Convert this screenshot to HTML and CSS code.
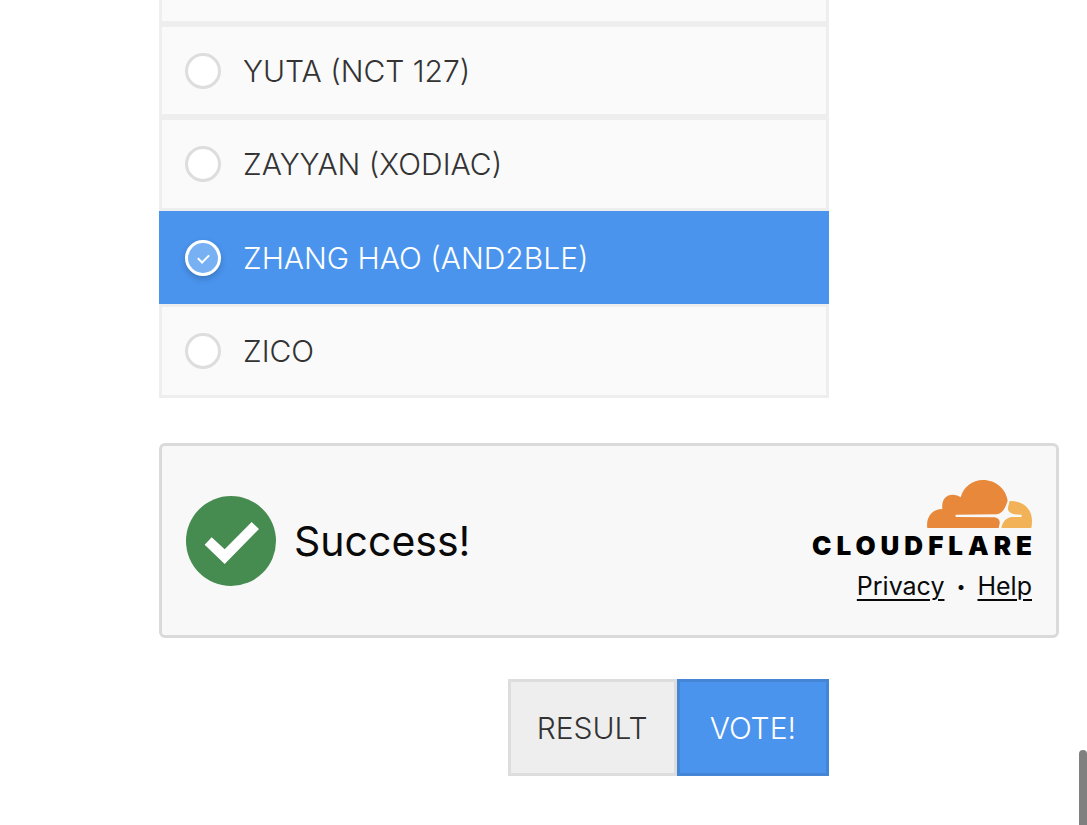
FILE: index.html
```html
<!DOCTYPE html>
<html lang="en">
<head>
<meta charset="utf-8">
<meta name="viewport" content="width=device-width, initial-scale=1">
<title>Vote</title>
<link rel="stylesheet" href="styles.css">
</head>
<body>
<main class="poll">
  <form class="poll-form">
    <div class="options" role="radiogroup" aria-label="Candidates">
      <div class="option option-cut"></div>
      <label class="option"><input class="radio" type="radio" name="vote"><span>YUTA (NCT 127)</span></label>
      <label class="option"><input class="radio" type="radio" name="vote"><span>ZAYYAN (XODIAC)</span></label>
      <label class="option"><input class="radio" type="radio" name="vote" checked><span>ZHANG HAO (AND2BLE)</span></label>
      <label class="option"><input class="radio" type="radio" name="vote"><span>ZICO</span></label>
    </div>

    <section class="check">
      <div class="status">
        <svg class="status-icon" viewBox="0 0 270 270" aria-hidden="true">
          <circle cx="135" cy="135" r="135" fill="#468b50"/>
          <path d="M56 146L77 124L116 160L197 78L219 99L116 204Z" fill="#fff"/>
        </svg>
        <span class="status-text">Success!</span>
      </div>
      <div class="brand">
        <svg class="cloud" viewBox="0 0 315 144" aria-hidden="true">
          <path fill="#e8883a" d="M1 144C-4 112 15 87 46 87C43 59 57 44 77 44C87 44 94 47 101 52C110 20 136 0 168 0C207 0 237 27 242 62C237 77 230 99 210 103L87 104Q83 107.500 87 111L203 112C216 114 221 124 217 135L215 144Z"/>
          <path fill="#f2b257" d="M248 63C289 61 315 88 315 122Q315 134 313 144H223C226 127 237 113 254 111H283Q286 107.500 283 104L261 103C246 98 240 91 244 78Z"/>
        </svg>
        <span class="brand-name">CLOUDFLARE</span>
        <nav class="links">
          <a href="#privacy">Privacy</a>
          <span class="dot">•</span>
          <a href="#help">Help</a>
        </nav>
      </div>
    </section>

    <div class="actions">
      <button class="button" type="button">RESULT</button>
      <button class="button button-primary" type="submit">VOTE!</button>
    </div>
  </form>
</main>
<div class="scroll-thumb"></div>
</body>
</html>
```
FILE: styles.css
```css
* { box-sizing: border-box; }

body {
  margin: 0;
  background: #fff;
  color: #333;
  font-family: Inter, "Liberation Sans", sans-serif;
}

.poll { padding: 0 28px 40px 159px; }

.options {
  display: grid;
  grid-template-rows: 24px;
  grid-auto-rows: 93px 94px;
  max-width: 670px;
}

.option {
  display: flex;
  align-items: center;
  gap: 22px;
  padding: 0 23px;
  border: 3px solid #eee;
  background: #fafafa;
  font-size: 30px;
  font-weight: 350;
  line-height: 40px;
}

.option-cut { border-top: 0; }

.option:has(.radio:checked) {
  border-color: #4a94ee;
  background: #4a94ee;
  color: #fff;
  font-weight: 300;
}

.radio {
  appearance: none;
  display: grid;
  place-items: center;
  flex: none;
  width: 36px;
  height: 36px;
  margin: 0;
  border: 3px solid #ddd;
  border-radius: 50%;
  background: #fff;
}

.radio:checked {
  border-color: #fff;
  background: #77b0f3;
  box-shadow: 0 3px 6px rgb(0 0 0 / 20%);
}

.radio:checked::before {
  content: "";
  width: 9px;
  height: 5px;
  border: solid #fff;
  border-width: 0 0 2px 2px;
  transform: rotate(-45deg);
}

.check {
  display: flex;
  align-items: center;
  justify-content: space-between;
  max-width: 900px;
  min-height: 195px;
  margin-top: 45px;
  padding: 0 24px;
  border: 3px solid #dadada;
  border-radius: 6px;
  background: #f8f8f8;
  color: #0a0a0a;
}

.status {
  display: flex;
  align-items: center;
  gap: 18px;
}

.status-icon { width: 90px; height: 90px; }

.status-text { font-size: 41px; line-height: 50px; }

.brand {
  display: flex;
  flex-direction: column;
  align-items: flex-end;
}

.cloud { width: 105px; height: 48px; }

.brand-name {
  margin-top: 3px;
  margin-right: -5px;
  color: #000;
  font-size: 26px;
  font-weight: 900;
  line-height: 30px;
  letter-spacing: 5px;
}

.links {
  display: flex;
  gap: 12px;
  margin-top: 10px;
  font-size: 25px;
  line-height: 30px;
}

.links a {
  color: inherit;
  text-decoration-thickness: 2px;
  text-underline-offset: 4px;
}

.dot { font-size: 16px; }

.actions {
  display: flex;
  justify-content: flex-end;
  max-width: 670px;
  margin-top: 41px;
}

.button {
  height: 97px;
  padding: 0 26px;
  border: 3px solid #ddd;
  background: #eee;
  color: #333;
  font-family: inherit;
  font-size: 30px;
  font-weight: 300;
}

.button-primary {
  padding: 0 30px;
  border-color: #4585d6;
  background: #4a94ee;
  color: #fff;
}

.scroll-thumb {
  position: fixed;
  right: 0;
  bottom: 0;
  width: 8px;
  height: 75px;
  border-radius: 4px 4px 0 0;
  background: #808080;
}
```
